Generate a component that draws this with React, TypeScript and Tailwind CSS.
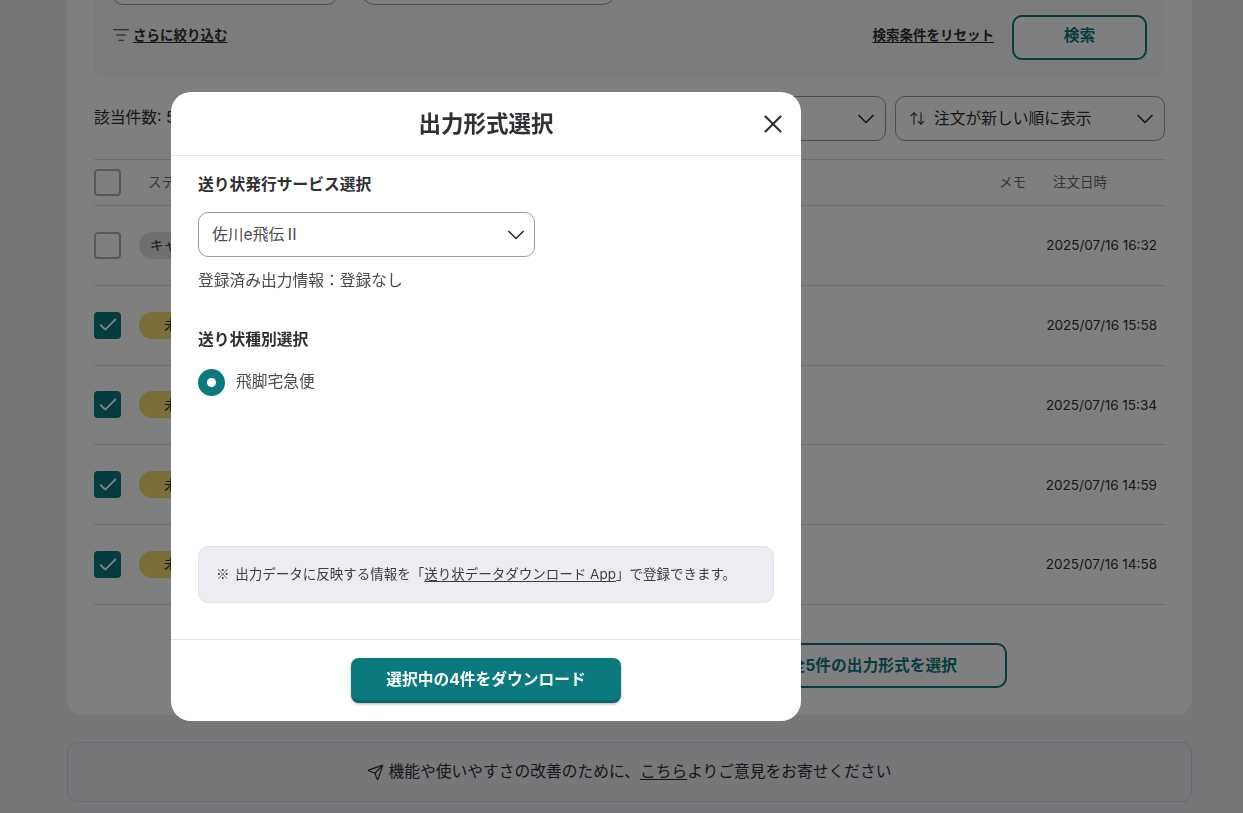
import { ArrowUpDown, Check, ChevronDown, ListFilter, Send, X } from "lucide-react";

const orders = [
  { status: "キャンセル", pill: "bg-[#dfe0e4] px-[11px]", date: "2025/07/16 16:32", checked: false },
  { status: "未発送", pill: "bg-[#f3dc6f] px-[25px]", date: "2025/07/16 15:58", checked: true },
  { status: "未発送", pill: "bg-[#f3dc6f] px-[25px]", date: "2025/07/16 15:34", checked: true },
  { status: "未発送", pill: "bg-[#f3dc6f] px-[25px]", date: "2025/07/16 14:59", checked: true },
  { status: "未発送", pill: "bg-[#f3dc6f] px-[25px]", date: "2025/07/16 14:58", checked: true },
];

function Checkbox({ checked }: { checked: boolean }) {
  if (checked) {
    return (
      <span className="flex h-[27px] w-[27px] shrink-0 items-center justify-center rounded-[4px] bg-[#0b7a7e]">
        <Check size={22} strokeWidth={2} className="text-white" />
      </span>
    );
  }
  return <span className="h-[27px] w-[27px] shrink-0 rounded-[4px] border-2 border-[#b0b1bc] bg-white" />;
}

export default function App() {
  return (
    <div className="h-[813px] overflow-hidden bg-[#eeeff3] pl-[67px] pr-[51px] font-['Inter','Noto_Sans_CJK_JP',sans-serif] text-[#2f3033]">
      {/* Card behind the dialog, scrolled past its top */}
      <div className="-mt-[40px] flex h-[755px] flex-col rounded-b-[16px] bg-white px-[27px]">
        <div className="flex h-[118px] shrink-0 flex-col rounded-b-[10px] bg-[#f6f9f6] pl-[19px] pr-[18px]">
          <div className="flex h-[45px] shrink-0 items-end gap-[23px]">
            <div className="h-[42px] w-[224px] rounded-[10px] border border-[#9a9ba5] bg-white" />
            <div className="h-[45px] w-[257px] rounded-[15px] border border-[#9a9ba5] bg-white" />
          </div>
          <div className="mt-[10px] flex items-center justify-between">
            <a className="-mt-[5px] flex items-center gap-[3px] text-[13.5px] font-bold underline underline-offset-2">
              <ListFilter size={18} strokeWidth={1.25} className="-ml-[1px]" />
              さらに絞り込む
            </a>
            <div className="flex items-center gap-[18px]">
              <a className="-mt-[5px] text-[13.5px] font-bold underline underline-offset-2">検索条件をリセット</a>
              <button className="h-[45px] w-[135px] rounded-[10px] border-2 border-[#0b7a7e] bg-white pb-[4px] text-[15.75px] font-bold text-[#0b7a7e]">
                検索
              </button>
            </div>
          </div>
        </div>

        <div className="mt-[18px] flex h-[45px] shrink-0 items-center justify-between">
          <span className="-mt-[1px] text-[15.75px]">該当件数: 5件</span>
          <div className="flex gap-[9px]">
            <div className="flex h-[45px] w-[270px] items-center justify-end rounded-[10px] border border-[#9a9ba5] pr-[5px]">
              <ChevronDown size={28} strokeWidth={1.5} />
            </div>
            <div className="flex h-[45px] w-[270px] items-center rounded-[10px] border border-[#9a9ba5] pl-[13px] pr-[5px]">
              <ArrowUpDown size={17} strokeWidth={1.5} />
              <span className="ml-[8px] flex-1 text-[15.75px]">注文が新しい順に表示</span>
              <ChevronDown size={28} strokeWidth={1.5} />
            </div>
          </div>
        </div>

        <div className="mt-[18px] flex h-[47px] shrink-0 items-center border-y border-[#dcdde2] text-[13.5px] text-[#6b6c72]">
          <Checkbox checked={false} />
          <span className="ml-[27px]">ステータス</span>
          <span className="ml-auto">メモ</span>
          <span className="ml-[27px] mr-[58px]">注文日時</span>
        </div>

        <div className="flex flex-col">
          {orders.map((order) => (
            <div key={order.date} className="flex h-[79.8px] shrink-0 items-center border-b border-[#dcdde2]">
              <Checkbox checked={order.checked} />
              <span className={`ml-[18px] flex h-[27px] items-center rounded-full text-[13.5px] ${order.pill}`}>
                {order.status}
              </span>
              <span className="ml-auto mr-[8px] text-[13.5px]">{order.date}</span>
            </div>
          ))}
        </div>

        <div className="mt-[38px] flex justify-end pr-[158px]">
          <button className="h-[45px] w-[400px] rounded-[10px] border-2 border-[#0b7a7e] bg-white pr-[48px] text-right text-[15.75px] font-bold text-[#0b7a7e]">
            全5件の出力形式を選択
          </button>
        </div>
      </div>

      <div className="mt-[27px] flex h-[60px] items-center justify-center gap-[4px] rounded-[10px] border border-[#cfd0d6] text-[15.75px]">
        <Send size={17} strokeWidth={1.75} />
        <span>
          機能や使いやすさの改善のために、<a className="underline underline-offset-2">こちら</a>よりご意見をお寄せください
        </span>
      </div>

      {/* Dialog */}
      <div className="fixed inset-0 flex items-center bg-black/50 pl-[171px]">
        <div className="flex h-[629px] w-[630px] flex-col rounded-[20px] bg-white">
          <div className="relative flex h-[64px] shrink-0 items-center justify-center border-b border-[#e4e5e9]">
            <h2 className="text-[22.5px] font-bold">出力形式選択</h2>
            <X size={30} strokeWidth={1.75} className="absolute right-[13px] top-[17px]" />
          </div>

          <div className="flex flex-1 flex-col px-[27px]">
            <p className="mt-[17px] text-[15.75px] font-bold leading-[24px]">送り状発行サービス選択</p>
            <div className="mt-[15px] flex h-[45px] w-[337px] items-center justify-between rounded-[10px] border border-[#9a9ba5] pl-[13px] pr-[4px]">
              <span className="text-[15.75px] text-[#4a4b50]">
                佐川e飛伝<span className="font-['Noto_Sans_CJK_JP']">Ⅱ</span>
              </span>
              <ChevronDown size={28} strokeWidth={1.5} />
            </div>
            <p className="mt-[12px] text-[15.75px] leading-[24px] text-[#4a4b50]">登録済み出力情報：登録なし</p>
            <p className="mt-[35px] text-[15.75px] font-bold leading-[24px]">送り状種別選択</p>
            <div className="mt-[17px] flex items-center gap-[11px]">
              <span className="flex h-[27px] w-[27px] items-center justify-center rounded-full bg-[#0b7a7e]">
                <span className="h-[9px] w-[9px] rounded-full bg-white" />
              </span>
              <span className="-mt-[2px] text-[15.75px] text-[#4a4b50]">飛脚宅急便</span>
            </div>
            <div className="mt-auto mb-[36px] flex h-[57px] items-center rounded-[10px] border border-[#e2e3e9] bg-[#ecedf2] px-[18px] text-[13.5px] text-[#3c3d42]">
              <span className="-mt-[1px] -ml-[1px]">
                <span className="mr-[2px] font-['Noto_Sans_CJK_JP']">※</span> 出力データに反映する情報を「<a className="underline underline-offset-2">送り状データダウンロード App</a>」で登録できます。
              </span>
            </div>
          </div>

          <div className="flex h-[82px] shrink-0 justify-center border-t border-[#e4e5e9] pt-[18px]">
            <button className="h-[45px] w-[270px] rounded-[8px] border-b-[3px] border-[#07666a] bg-[#0b7a7e] pt-[2px] text-[15.75px] font-bold text-white shadow-[0_1px_3px_rgba(0,0,0,0.3)]">
              選択中の4件をダウンロード
            </button>
          </div>
        </div>
      </div>
    </div>
  );
}
